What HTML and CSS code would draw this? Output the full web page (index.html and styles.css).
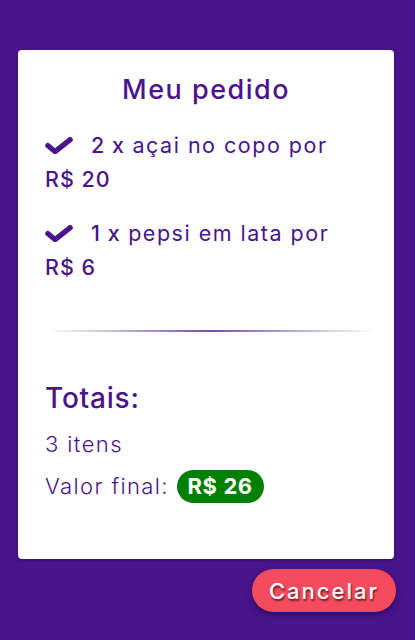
FILE: index.html
```html
<!DOCTYPE html>
<html lang="pt-BR">
<head>
<meta charset="utf-8">
<title>Meu pedido</title>
<link rel="stylesheet" href="styles.css">
</head>
<body>
<main class="page">
  <section class="card">
    <h1 class="title">Meu pedido</h1>
    <ul class="items">
      <li class="item">
        <svg class="check" viewBox="0 0 28 17" aria-hidden="true"><path d="M2.8 8.6 L10 14.6 L25.2 2.6" fill="none" stroke="currentColor" stroke-width="5.2" stroke-linecap="round" stroke-linejoin="round"/></svg><strong class="qty">2 x</strong> açai no copo por <strong class="price">R$ 20</strong>
      </li>
      <li class="item">
        <svg class="check" viewBox="0 0 28 17" aria-hidden="true"><path d="M2.8 8.6 L10 14.6 L25.2 2.6" fill="none" stroke="currentColor" stroke-width="5.2" stroke-linecap="round" stroke-linejoin="round"/></svg><strong class="qty">1 x</strong> pepsi em lata por <strong class="price">R$ 6</strong>
      </li>
    </ul>
    <hr class="divider">
    <div class="totals">
      <h2 class="totals-title">Totais:</h2>
      <p class="totals-line">3 itens</p>
      <p class="totals-line totals-value">Valor final: <span class="pill">R$ 26</span></p>
    </div>
  </section>
  <div class="actions">
    <button class="cancel" type="button">Cancelar</button>
  </div>
</main>
</body>
</html>
```
FILE: styles.css
```css
html, body {
  margin: 0;
  padding: 0;
}
body {
  background: #4a148c;
  font-family: "Inter", "Open Sans", sans-serif;
  color: #4a148c;
  height: 640px;
  overflow: hidden;
}
.page {
  padding: 50px 21px 0 18px;
}
.card {
  background: #fff;
  border-radius: 4px;
  height: 509px;
  box-sizing: border-box;
  padding: 20px 27px 0 27px;
  box-shadow: 0 1px 3px rgba(0,0,0,0.35);
}
.title {
  margin: 0;
  text-align: center;
  font-size: 27px;
  font-weight: 500;
  line-height: 40px;
  letter-spacing: 1.5px;
}
.items {
  list-style: none;
  margin: 18px 0 0;
  padding: 0;
  display: flex;
  flex-direction: column;
  gap: 20px;
}
.item {
  font-size: 21.5px;
  font-weight: 400;
  line-height: 34px;
  letter-spacing: 1.5px;
}
.check {
  width: 28px;
  height: 17px;
  vertical-align: -1px;
  margin-right: 18px;
}
.qty {
  font-weight: 500;
  letter-spacing: 1px;
}
.price {
  font-weight: 500;
  white-space: nowrap;
  letter-spacing: 1px;
}
.divider {
  border: 0;
  height: 2px;
  margin: 46px -10px 0 1px;
  background: linear-gradient(90deg, rgba(74,20,140,0) 0%, rgba(74,20,140,0.75) 50%, rgba(74,20,140,0) 100%);
}
.totals {
  margin-top: 46px;
}
.totals-title {
  margin: 0;
  font-size: 28px;
  font-weight: 500;
  line-height: 40px;
  letter-spacing: 0.8px;
}
.totals-line {
  margin: 8px 0 0;
  font-size: 22px;
  font-weight: 300;
  line-height: 36px;
  letter-spacing: 1.4px;
}
.totals-value {
  margin-top: 6px;
}
.pill {
  display: inline-block;
  background: #008000;
  color: #fff;
  font-weight: 700;
  border-radius: 17px;
  padding: 0 11px;
  line-height: 33px;
  letter-spacing: 0.6px;
}
.actions {
  display: flex;
  justify-content: flex-end;
  margin: 10px -2px 0 0;
}
.cancel {
  background: #f54b5e;
  color: #fff;
  border: 0;
  border-radius: 22px;
  width: 144px;
  height: 43px;
  padding: 0;
  font-family: inherit;
  font-size: 22px;
  font-weight: 500;
  letter-spacing: 2px;
  text-shadow: 1px 2px 2px rgba(60,0,0,0.7);
  box-shadow: 0 3px 6px rgba(0,0,0,0.35);
}
```
